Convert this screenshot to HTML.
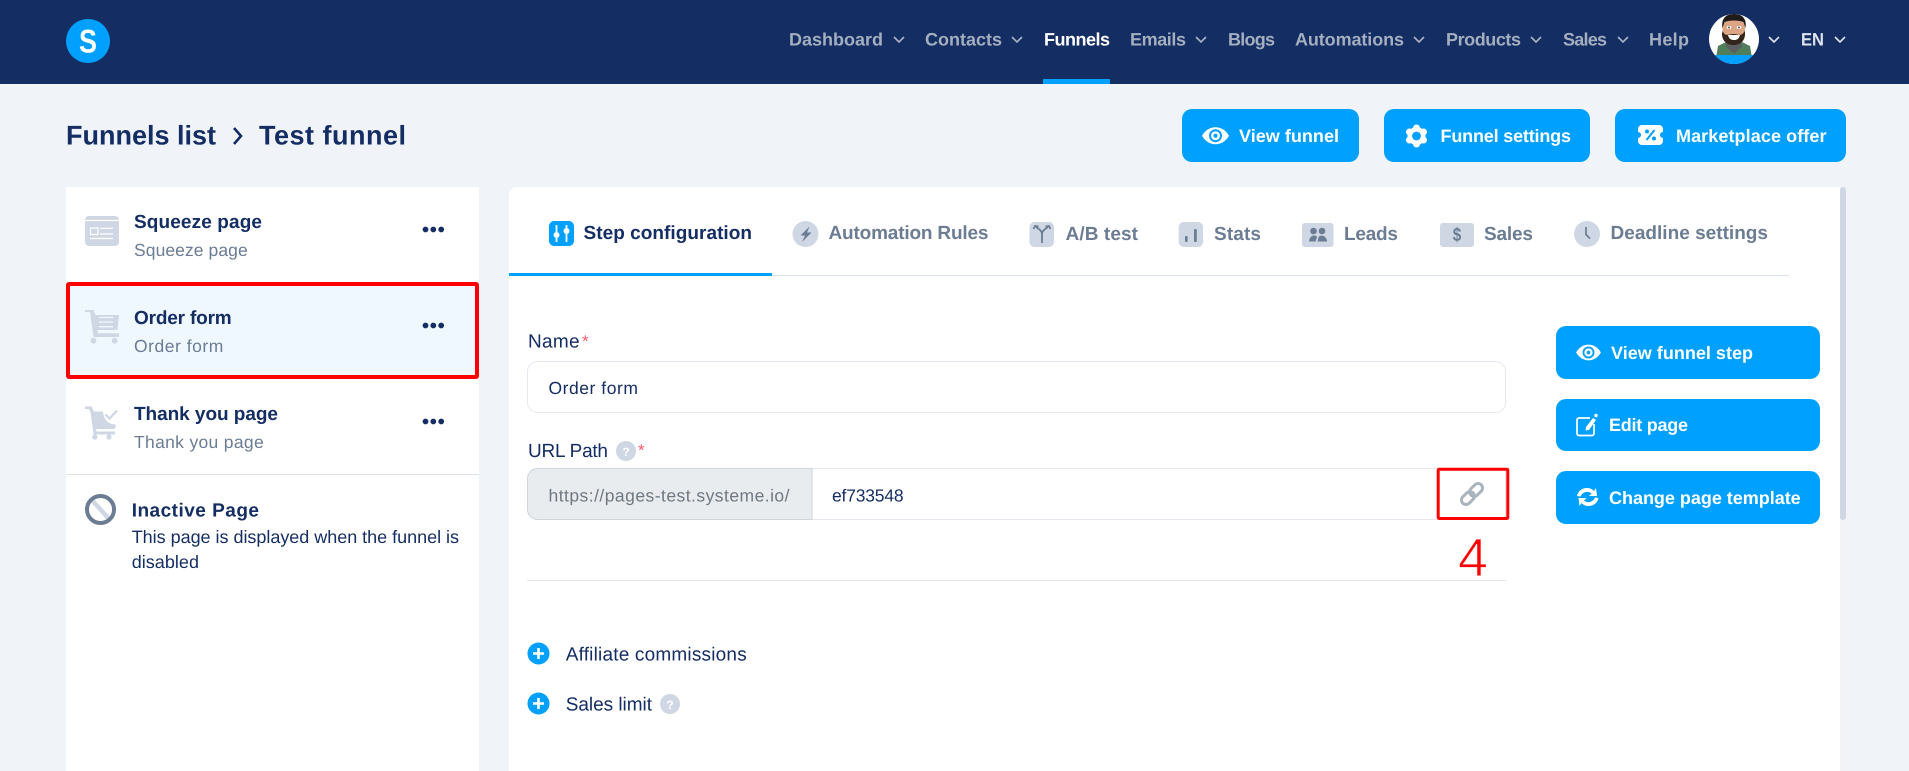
<!DOCTYPE html>
<html lang="en"><head><meta charset="utf-8"><title>Test funnel</title>
<style>
html,body{margin:0;padding:0;width:1909px;height:771px;overflow:hidden;background:#f0f3f8}
svg{display:block;font-family:"Liberation Sans",sans-serif}
.nav{font-size:18px;font-weight:700;fill:#a3aebf}
.btn{font-size:18px;font-weight:700;fill:#fff}
.tt{font-size:19px;font-weight:700;fill:#142d63}
.sub{font-size:17.5px;fill:#6b7c93}
.tab{font-size:19px;font-weight:700;fill:#6b7c93}
.lab{font-size:19px;fill:#142d63}
.inp{font-size:17.5px;fill:#142d63}
.chev{fill:none;stroke:#a9b4c3;stroke-width:1.6}
</style></head><body>
<svg width="1909" height="771" viewBox="0 0 1909 771" xmlns="http://www.w3.org/2000/svg" text-rendering="geometricPrecision">
<defs>
<clipPath id="av"><circle cx="1734" cy="39" r="25"/></clipPath>
<g id="eye"><path d="M-13.500 0C-10-6-5-8.500 0-8.500S10-6 13.500 0C10 6 5 8.500 0 8.500S-10 6-13.500 0Z" fill="#fff"/><circle r="6.500" fill="#00a0ff"/><circle r="4.500" fill="#fff"/><circle r="2" fill="#00a0ff"/></g>
</defs>
<rect width="1909" height="771" fill="#f0f3f8"/>
<!-- header -->
<rect width="1909" height="84" fill="#142d63"/>
<circle cx="88" cy="41" r="22" fill="#00a0ff"/>
<text x="79" y="52.500" font-size="33" font-weight="700" fill="#fff" textLength="18" lengthAdjust="spacingAndGlyphs">S</text>
<text class="nav" x="789" y="45.500" textLength="94" lengthAdjust="spacing">Dashboard</text>
<path class="chev" d="M894 37l5 5 5-5"/>
<text class="nav" x="925" y="45.500" textLength="77" lengthAdjust="spacing">Contacts</text>
<path class="chev" d="M1012 37l5 5 5-5"/>
<text class="nav" x="1044" y="45.500" textLength="66" lengthAdjust="spacing" style="fill:#fff">Funnels</text>
<rect x="1043" y="79" width="67" height="5" fill="#00a0ff"/>
<text class="nav" x="1130" y="45.500" textLength="56" lengthAdjust="spacing">Emails</text>
<path class="chev" d="M1196 37l5 5 5-5"/>
<text class="nav" x="1228" y="45.500" textLength="47" lengthAdjust="spacing">Blogs</text>
<text class="nav" x="1295" y="45.500" textLength="109" lengthAdjust="spacing">Automations</text>
<path class="chev" d="M1414 37l5 5 5-5"/>
<text class="nav" x="1446" y="45.500" textLength="75" lengthAdjust="spacing">Products</text>
<path class="chev" d="M1531 37l5 5 5-5"/>
<text class="nav" x="1563" y="45.500" textLength="44" lengthAdjust="spacing">Sales</text>
<path class="chev" d="M1618 37l5 5 5-5"/>
<text class="nav" x="1649" y="45.500" textLength="40" lengthAdjust="spacing">Help</text>
<!-- avatar -->
<g clip-path="url(#av)">
<rect x="1709" y="14" width="50" height="50" fill="#fff"/>
<path d="M1716 58l2-12 10-5h12l10 5 2 12z" fill="#4f7f5a"/>
<path d="M1727 41l7 4 7-4 1 6-8 7-8-7z" fill="#5c5f60"/>
<rect x="1709" y="55" width="50" height="9" fill="#00a0ff"/>
<path d="M1722.500 24c0-5 5-8 11.500-8s11 3 11 8v8c0 8-5 12-11 12s-11.500-4-11.500-12z" fill="#dca584"/>
<path d="M1722.500 31l2 3c3 2 5 0 9 0s6 2 9 0l2.500-3v3c0 7-5 11-11.500 11s-11.500-4-11.500-11z" fill="#33241c"/>
<path d="M1728 35h12c-1 4-3 5-6 5s-5-1-6-5z" fill="#fff"/>
<path d="M1722.500 28c-1.500-9 3-14 11.500-14s13 5 11.500 14l-2-6c-5-2-14-2-19 0z" fill="#1e1b19"/>
<ellipse cx="1729" cy="27.500" rx="2.300" ry="1.500" fill="#fff"/><ellipse cx="1739" cy="27.500" rx="2.300" ry="1.500" fill="#fff"/>
<circle cx="1729" cy="27.500" r="1" fill="#4a5a5a"/><circle cx="1739" cy="27.500" r="1" fill="#4a5a5a"/>
</g>
<path class="chev" d="M1769 37l5 5 5-5" style="stroke:#dfe4ec"/>
<text class="nav" x="1801" y="45.500" textLength="23" lengthAdjust="spacingAndGlyphs" style="fill:#dfe4ec">EN</text>
<path class="chev" d="M1835 37l5 5 5-5" style="stroke:#dfe4ec"/>
<!-- breadcrumb -->
<text x="66" y="144.500" font-size="27" font-weight="700" fill="#142d63" textLength="150" lengthAdjust="spacing">Funnels list</text>
<path d="M234 128l7 8-7 8" fill="none" stroke="#142d63" stroke-width="2.600"/>
<text x="259" y="144.500" font-size="27" font-weight="700" fill="#142d63" textLength="147" lengthAdjust="spacing">Test funnel</text>
<!-- top buttons -->
<rect x="1182" y="109" width="177" height="53" rx="10" fill="#00a0ff"/>
<rect x="1384" y="109" width="206" height="53" rx="10" fill="#00a0ff"/>
<rect x="1615" y="109" width="231" height="53" rx="10" fill="#00a0ff"/>
<use href="#eye" transform="translate(1215.500 135.700)"/>
<text class="btn" x="1239" y="142" textLength="100" lengthAdjust="spacing">View funnel</text>
<g transform="translate(1416.500 136)"><g stroke="#fff" stroke-width="7" stroke-linecap="round"><path d="M0-8V8"/><path d="M-7-4L7 4"/><path d="M-7 4L7-4"/></g><circle r="9" fill="#fff"/><circle r="4.400" fill="#00a0ff"/></g>
<text class="btn" x="1440.500" y="142" textLength="130.500" lengthAdjust="spacing">Funnel settings</text>
<g transform="translate(1638 125)"><path d="M4 0H21a4 4 0 0 1 4 4V7a3 3 0 0 0 0 6v3a4 4 0 0 1-4 4H4a4 4 0 0 1-4-4V13a3 3 0 0 0 0-6V4a4 4 0 0 1 4-4Z" fill="#fff"/><path d="M16.500 5L8.500 15" stroke="#00a0ff" stroke-width="2"/><circle cx="9" cy="6.500" r="2" fill="#00a0ff"/><circle cx="16" cy="13.500" r="2" fill="#00a0ff"/></g>
<text class="btn" x="1676" y="142" textLength="150.500" lengthAdjust="spacing">Marketplace offer</text>
<!-- left panel -->
<rect x="66" y="187" width="413" height="584" fill="#fff"/>
<rect x="66" y="282" width="413" height="97" fill="#f0f8ff"/>
<rect x="68" y="284" width="409" height="93" rx="1" fill="none" stroke="#f00" stroke-width="4"/>
<!-- squeeze icon -->
<rect x="85" y="216" width="34" height="30" rx="4" fill="#cfd7e4"/>
<path d="M85 220.500h34M100 228.300h13M100 234h13M90 238.500h23" stroke="#fff" stroke-width="1.200"/>
<rect x="90.500" y="228" width="7.500" height="6.500" fill="none" stroke="#fff" stroke-width="1.200"/>
<text class="tt" x="134" y="228" textLength="128" lengthAdjust="spacing">Squeeze page</text>
<text class="sub" x="134" y="256" textLength="113.700" lengthAdjust="spacing">Squeeze page</text>
<g fill="#142d63"><circle cx="425.500" cy="229.500" r="2.900"/><circle cx="433.300" cy="229.500" r="2.900"/><circle cx="441.200" cy="229.500" r="2.900"/></g>
<!-- cart icon -->
<path d="M85 310h8.500l2 5H119l-1.500 15H97.500l.5 3.300h21V337H93.500l-3.500-24.500-1.500-.5H85z" fill="#cfd7e4"/>
<path d="M99 317.500h14M99 322h14M99 326.700h14" stroke="#f0f8ff" stroke-width="1.300"/>
<circle cx="93.500" cy="340.700" r="2.900" fill="#cfd7e4"/><circle cx="114.700" cy="340.700" r="2.900" fill="#cfd7e4"/>
<text class="tt" x="134" y="324" textLength="97.700" lengthAdjust="spacing">Order form</text>
<text class="sub" x="134" y="352" textLength="89.300" lengthAdjust="spacing">Order form</text>
<g fill="#142d63"><circle cx="425.500" cy="325.500" r="2.900"/><circle cx="433.300" cy="325.500" r="2.900"/><circle cx="441.200" cy="325.500" r="2.900"/></g>
<!-- thank you icon -->
<path d="M85 406.500h6.500l2.500 5h9c.5 8 5.500 13 13 13l-1 4.500H96l.5 2.500H115v3H93.500l-3-22.500-2-3H85z" fill="#cfd7e4"/>
<path d="M105.500 414.500l4 4 7.500-8" fill="none" stroke="#cfd7e4" stroke-width="2.200"/>
<circle cx="94.800" cy="437" r="2.600" fill="#cfd7e4"/><circle cx="109" cy="437" r="2.600" fill="#cfd7e4"/>
<text class="tt" x="134" y="420" textLength="144" lengthAdjust="spacing">Thank you page</text>
<text class="sub" x="134" y="448" textLength="129.700" lengthAdjust="spacing">Thank you page</text>
<g fill="#142d63"><circle cx="425.500" cy="421.500" r="2.900"/><circle cx="433.300" cy="421.500" r="2.900"/><circle cx="441.200" cy="421.500" r="2.900"/></g>
<rect x="66" y="474" width="413" height="1" fill="#dfe4ec"/>
<!-- inactive -->
<path d="M91 499l19 21" stroke="#cfd7e4" stroke-width="4.500"/>
<circle cx="100.500" cy="509.500" r="13.500" fill="none" stroke="#6b7c93" stroke-width="4"/>
<text class="tt" x="131.700" y="516.500" textLength="127.300" lengthAdjust="spacing">Inactive Page</text>
<text class="inp" style="font-size:18px" x="131.700" y="543" textLength="327.300" lengthAdjust="spacing">This page is displayed when the funnel is</text>
<text class="inp" style="font-size:18px" x="131.700" y="568" textLength="67.300" lengthAdjust="spacing">disabled</text>
<!-- main panel -->
<path d="M509 771V195a8 8 0 0 1 8-8H1840V771z" fill="#fff"/>
<rect x="1840" y="187" width="6" height="584" fill="#f1f3f7"/>
<rect x="1840" y="187" width="6" height="333" rx="3" fill="#cfd7e4"/>
<!-- tabs -->
<rect x="509" y="275" width="1280" height="1.200" fill="#dfe4ec"/>
<rect x="509" y="273" width="263" height="3" fill="#00a0ff"/>
<rect x="549" y="221" width="25" height="25" rx="5" fill="#00a0ff"/>
<path d="M556.500 225v7M556.500 238v4M566.500 225v3M566.500 234v8" stroke="#fff" stroke-width="1.800"/>
<circle cx="556.500" cy="235" r="3" fill="#fff"/><circle cx="566.500" cy="231" r="3" fill="#fff"/>
<text class="tab" style="fill:#142d63" x="583.500" y="239" textLength="168.500" lengthAdjust="spacing">Step configuration</text>
<circle cx="805.500" cy="234" r="13" fill="#cfd7e4"/>
<path d="M809.500 226.500l-9 9h4.500l-3 6.500 9.500-9.500h-4.500z" fill="#6b7c93"/>
<text class="tab" x="828.500" y="239" textLength="160" lengthAdjust="spacing">Automation Rules</text>
<rect x="1029.500" y="222" width="24.500" height="25" rx="5" fill="#cfd7e4"/>
<path d="M1042 243v-9c0-3-3-5-6-7M1042 234c0-3 3-5 6-7M1033.500 229l1.500-3 3.500 .5M1050.500 229l-1.500-3-3.500 .5" fill="none" stroke="#6b7c93" stroke-width="1.800"/>
<text class="tab" x="1065.500" y="240" textLength="72.500" lengthAdjust="spacing">A/B test</text>
<rect x="1178.700" y="222" width="24.300" height="25" rx="5" fill="#cfd7e4"/>
<rect x="1185" y="236" width="2.600" height="6" rx="1" fill="#6b7c93"/><rect x="1194" y="229" width="2.800" height="13" rx="1" fill="#6b7c93"/>
<text class="tab" x="1214" y="240" textLength="47" lengthAdjust="spacing">Stats</text>
<rect x="1302" y="223" width="31.500" height="24" rx="3" fill="#cfd7e4"/>
<g fill="#6b7c93"><circle cx="1313.500" cy="231" r="3.300"/><circle cx="1322" cy="231" r="3.300"/><path d="M1309 241.500c.5-4 2.500-6 5-6 1.500 0 2.500 .5 3 1.500l-1.500 4.500zM1317.500 241.500l1-4c1-2.500 5-2.500 7 0 1 1 1.500 2.500 1.500 4z"/></g>
<text class="tab" x="1344" y="240" textLength="54" lengthAdjust="spacing">Leads</text>
<rect x="1440" y="223" width="34" height="24" rx="3" fill="#cfd7e4"/>
<text x="1457" y="241" text-anchor="middle" font-size="19" font-weight="700" fill="#6b7c93" textLength="8.500" lengthAdjust="spacingAndGlyphs">$</text>
<text class="tab" x="1484" y="240" textLength="49" lengthAdjust="spacing">Sales</text>
<circle cx="1587" cy="234" r="13" fill="#cfd7e4"/>
<path d="M1586 227v7.500l4 4" fill="none" stroke="#6b7c93" stroke-width="1.700"/>
<text class="tab" x="1610.500" y="239" textLength="157.500" lengthAdjust="spacing">Deadline settings</text>
<!-- form -->
<text class="lab" x="528" y="347.500" textLength="51.600" lengthAdjust="spacing">Name</text>
<text x="582" y="347" font-size="17" fill="#ff5a6e">*</text>
<rect x="527.500" y="361.500" width="978" height="51" rx="10" fill="#fff" stroke="#e5e8ee"/>
<text class="inp" x="548.500" y="394" textLength="89.400" lengthAdjust="spacing">Order form</text>
<text class="lab" x="528" y="457" textLength="80" lengthAdjust="spacing">URL Path</text>
<circle cx="626" cy="451" r="10" fill="#cfd7e4"/>
<text x="626" y="456" text-anchor="middle" font-size="12" font-weight="700" fill="#fff">?</text>
<text x="638" y="456" font-size="17" fill="#ff5a6e">*</text>
<path d="M812 468.500H1505.500V519.500H812z" fill="#fff" stroke="#e5e8ee"/>
<path d="M812 468.500H537.500a10 10 0 0 0-10 10V509.500a10 10 0 0 0 10 10H812z" fill="#e9ecef" stroke="#ced4da"/>
<text class="inp" style="fill:#6f7880" x="548.500" y="501.500" textLength="241" lengthAdjust="spacing">https://pages-test.systeme.io/</text>
<text class="inp" x="832" y="501.500" textLength="71.600" lengthAdjust="spacing">ef733548</text>
<rect x="1438.200" y="469.200" width="69.600" height="49.300" fill="none" stroke="#f00" stroke-width="3" rx="1"/>
<g fill="none" stroke="#a9b4be" stroke-width="3" transform="rotate(-45 1472 494)"><rect x="1459" y="489.500" width="14.500" height="9" rx="4.500"/><rect x="1470.500" y="489.500" width="14.500" height="9" rx="4.500"/></g>
<text x="1458" y="576" font-size="54" fill="#f00" stroke="#fff" stroke-width="1" paint-order="fill" textLength="30" lengthAdjust="spacingAndGlyphs">4</text>
<rect x="527" y="580" width="979" height="1" fill="#dfe4ec"/>
<circle cx="538.500" cy="653.500" r="11" fill="#00a0ff"/><path d="M533 653.500h11M538.500 648v11" stroke="#fff" stroke-width="2.600"/>
<text class="lab" x="565.700" y="660.500" textLength="181" lengthAdjust="spacing">Affiliate commissions</text>
<circle cx="538.500" cy="703.500" r="11" fill="#00a0ff"/><path d="M533 703.500h11M538.500 698v11" stroke="#fff" stroke-width="2.600"/>
<text class="lab" x="565.700" y="710.500" textLength="86.300" lengthAdjust="spacing">Sales limit</text>
<circle cx="670" cy="704" r="10" fill="#cfd7e4"/>
<text x="670" y="709" text-anchor="middle" font-size="12" font-weight="700" fill="#fff">?</text>
<!-- side buttons -->
<rect x="1556" y="326" width="264" height="53" rx="10" fill="#00a0ff"/>
<rect x="1556" y="399" width="264" height="52" rx="10" fill="#00a0ff"/>
<rect x="1556" y="471" width="264" height="53" rx="10" fill="#00a0ff"/>
<use href="#eye" transform="translate(1588.500 352.500) scale(.92)"/>
<text class="btn" x="1611" y="359" textLength="142" lengthAdjust="spacing">View funnel step</text>
<path d="M1590 418h-11a2 2 0 0 0-2 2v13.500a2 2 0 0 0 2 2h13a2 2 0 0 0 2-2V424" fill="none" stroke="#fff" stroke-width="1.700"/>
<path d="M1586 427l-.5 3.500 3.500-.5 7-10-3-2z" fill="#fff"/><circle cx="1596" cy="415.500" r="1.700" fill="#fff"/>
<text class="btn" x="1609" y="431" textLength="79" lengthAdjust="spacing">Edit page</text>
<path d="M1577 496c1-5 5-8 10-8 3 0 5 1 7 3l2-3 1 8-8 0 2.500-2.500c-3-3-9-2-11 3zM1598.500 498c-1 5-5 8-10 8-3 0-5-1-7-3l-2 3-1-8 8 0-2.500 2.500c3 3 9 2 11-3z" fill="#fff"/>
<text class="btn" x="1609" y="504" textLength="191.700" lengthAdjust="spacing">Change page template</text>
</svg>
</body></html>
